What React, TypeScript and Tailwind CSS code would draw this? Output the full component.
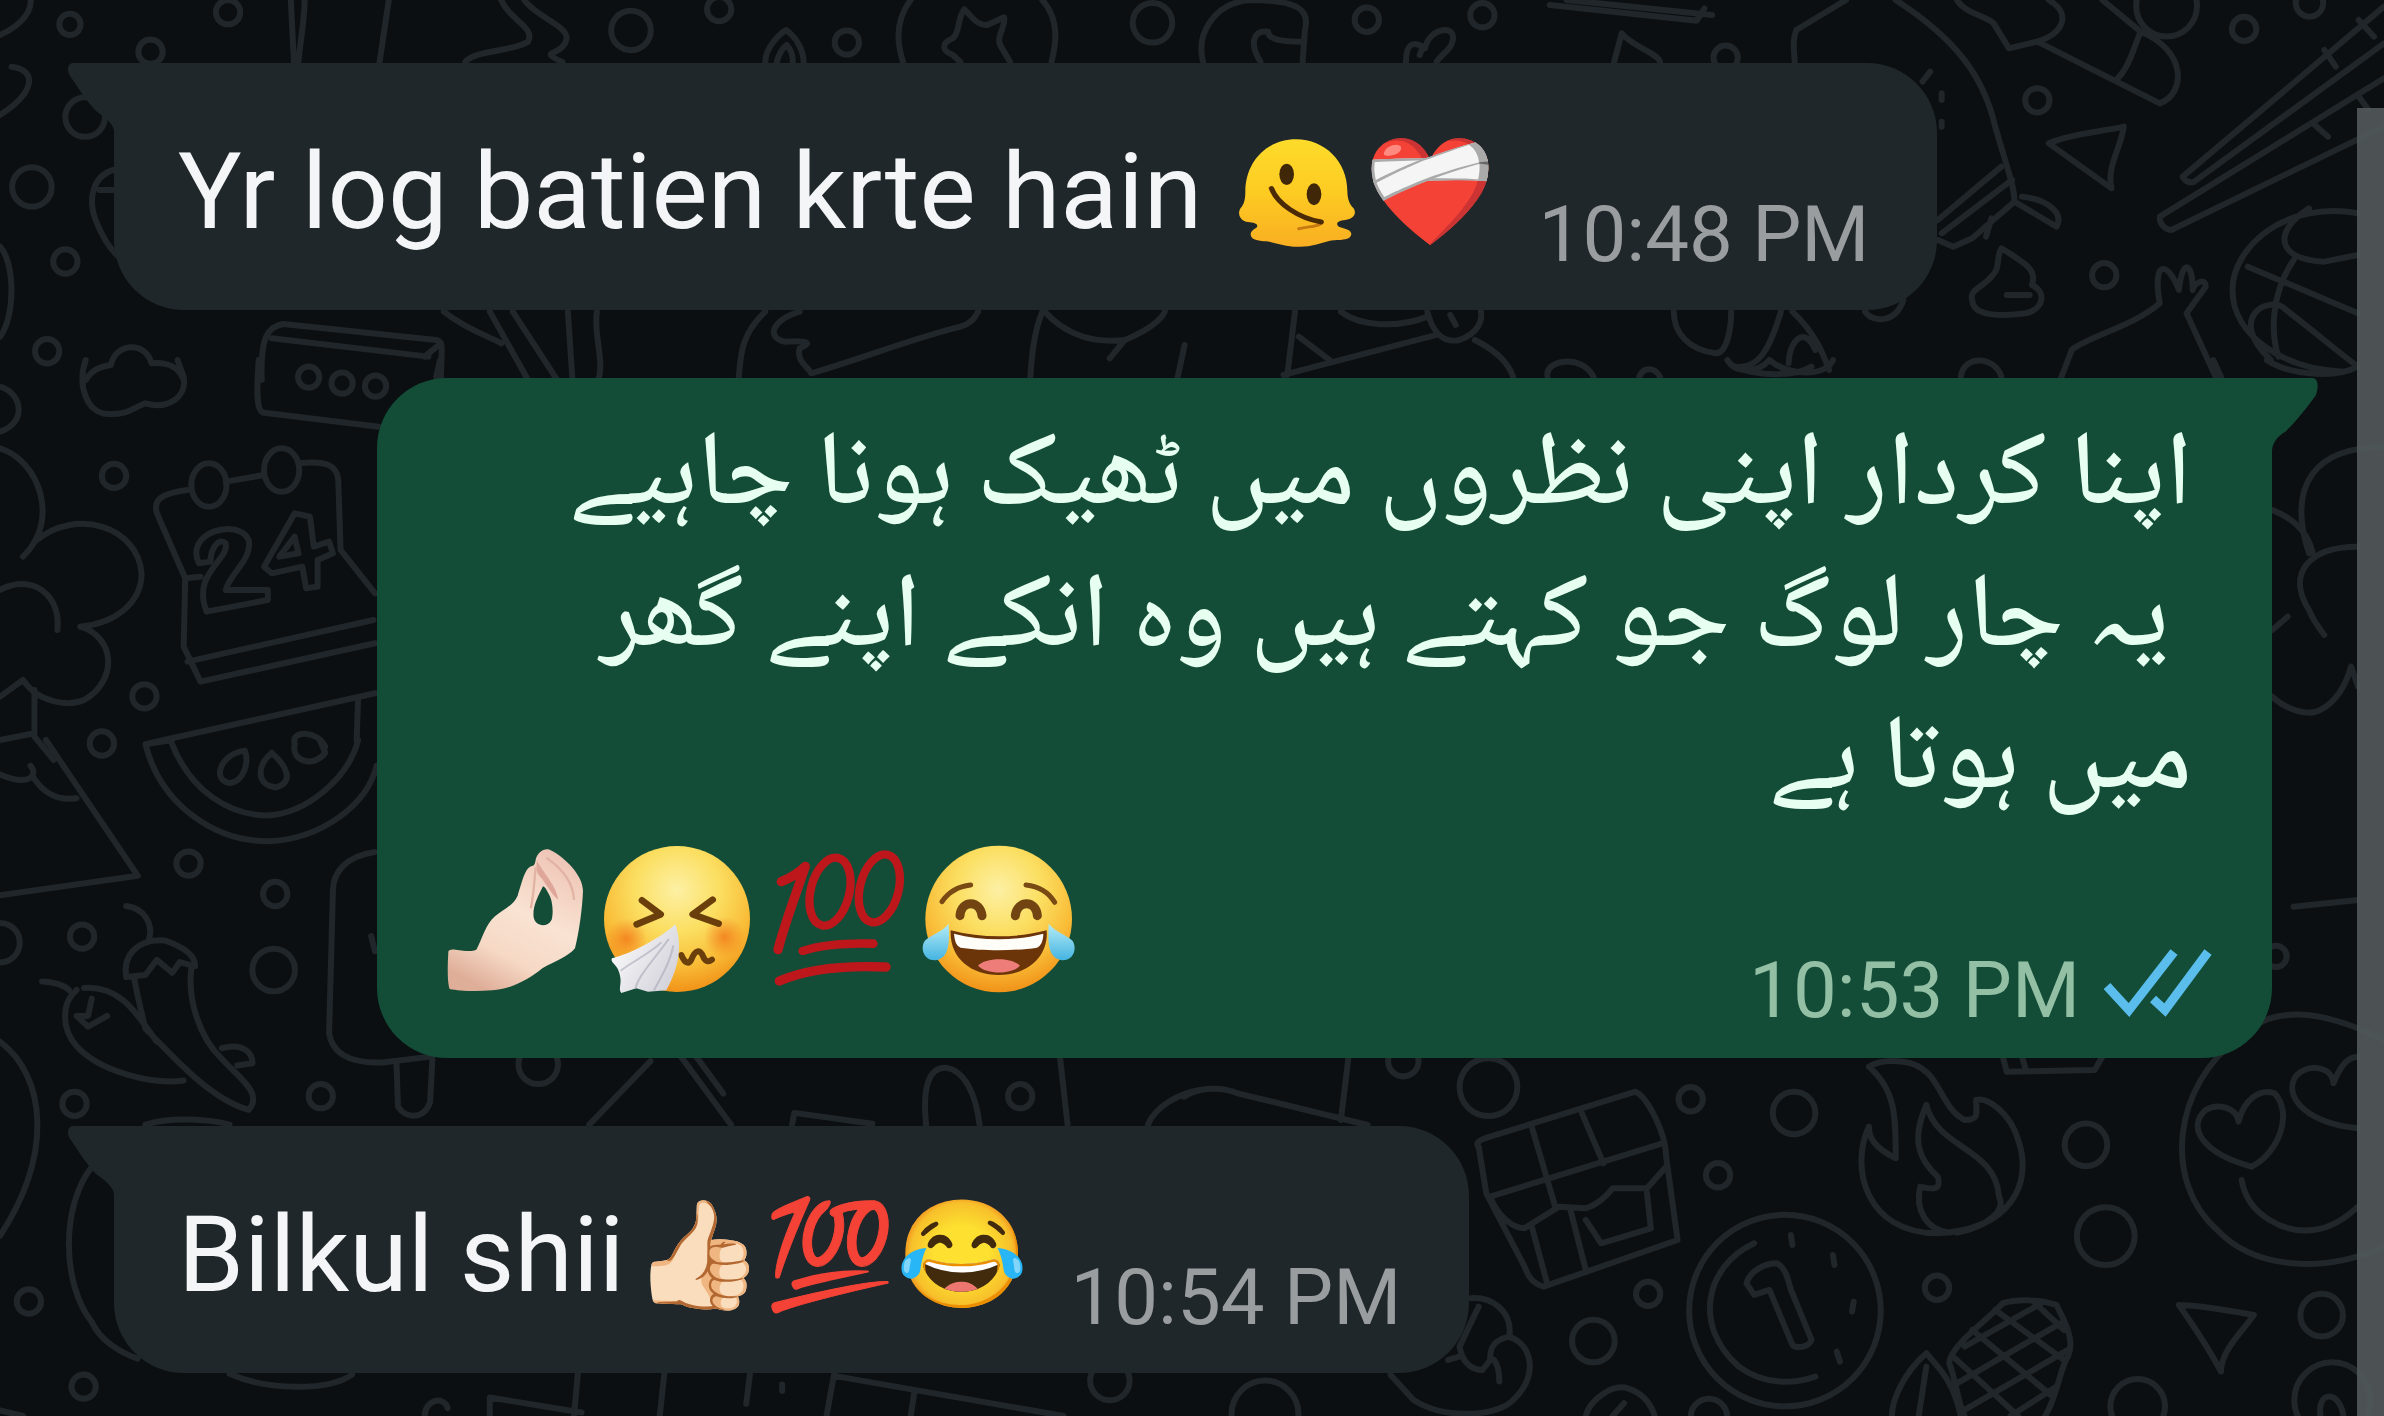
import React from "react";

const doodles: { transform: string; paths: string[] }[] = [
  {
    transform: "scale(.7653 .3333)",
    paths: [
      "M40 0C42 50 15 90 0 105M15 200C50 210 45 280 0 345M0 740C20 790 20 950 0 1010",
      "M380 0L384 186M398 0C398 60 392 130 390 186M508 0L496 186",
      "M655 0C665 60 700 80 690 125C670 155 620 150 608 186M685 0C700 50 745 80 740 120C735 170 700 150 735 186",
      "M1000 186C1000 140 1020 100 1027 90C1040 110 1050 150 1050 186M1015 186C1018 160 1022 145 1028 135C1034 150 1036 170 1036 186",
      "M1190 0C1170 60 1172 130 1180 186M1362 0C1385 60 1380 130 1374 186",
      "M1320 186L1308 140C1300 110 1315 80 1312 52L1290 75C1275 75 1270 50 1260 28C1250 60 1255 95 1245 115C1230 130 1230 150 1245 165L1255 186",
      "M370 972L570 1020C580 1025 577 1040 576 1140M355 1015L560 1070M370 972C350 980 340 1010 342 1140M576 1030L555 1070",
      "M580 935C610 990 640 1010 655 1030M640 935L690 1140M670 935L728 1140M742 935L748 1140M780 935C775 1000 790 1080 782 1140",
      "M1000 935C965 1010 968 1080 965 1140M1045 935C1010 960 1000 1010 1025 1025C1060 1020 1060 1030 1045 1045C1040 1080 1055 1100 1060 1120C1120 1080 1200 1010 1255 980C1270 970 1275 950 1278 935",
      "M1362 935C1350 1000 1348 1080 1346 1140M1365 935C1395 1010 1430 1030 1470 1020C1490 1000 1515 970 1522 935M1450 1075L1468 1025M1548 1035L1538 1140",
      "M112 1140C120 1110 130 1100 145 1095C150 1030 190 1020 198 1090C225 1085 235 1110 240 1140",
      "M148 510C120 530 115 600 125 660C135 720 145 750 155 770M130 570L148 570",
    ],
  },
  {
    transform: "translate(1184 0) scale(.7653 .3333)",
    paths: [
      "M25 186C15 100 40 10 85 0C150 0 165 30 158 90L155 186M100 186C85 130 90 90 110 95C110 120 130 125 155 125",
      "M290 186C290 130 300 120 315 145C320 80 360 70 350 130C348 150 335 165 330 186M312 140L308 165",
      "M562 186L572 100C585 140 620 160 622 186M478 15L670 62L680 25M500 0L690 45",
      "M865 0L800 90C795 120 797 150 798 186M930 0C1010 120 1045 230 1060 380C1075 500 1085 560 1085 600",
      "M1068 500L985 660M1082 540L990 700M985 720L1005 740L1030 715L1060 655L1085 605L1140 680C1150 640 1130 600 1095 590M1055 655L1048 710",
      "M965 245L975 215M990 280L990 300M990 365L990 380",
      "M1010 0C1020 40 1050 50 1058 70L1078 145L1115 125C1150 100 1160 40 1130 0M1115 125L1275 310C1310 280 1310 150 1250 95L1200 0M1250 95C1240 150 1235 200 1220 235",
      "M1130 430C1160 400 1200 395 1228 380C1225 440 1205 500 1212 565Z",
      "M1568 20L1305 530C1308 545 1315 550 1320 545L1568 130M1490 150L1505 200M1535 60L1555 110M1568 235L1275 650C1275 680 1285 690 1290 690L1568 380M1475 370L1495 410M1535 290L1548 330",
      "M1068 745C1100 790 1115 810 1108 855C1130 880 1120 930 1100 940C1070 950 1030 950 1030 900C1025 870 1045 860 1055 830C1068 800 1060 780 1068 745M1075 885L1105 885",
      "M1350 1140L1310 940L1335 860C1335 830 1320 850 1318 870C1318 790 1305 770 1300 870C1285 780 1265 780 1275 910C1240 980 1180 1010 1160 1050L1145 1140",
      "M1534 640C1440 600 1370 740 1370 870C1370 1010 1440 1110 1515 1115M1390 800L1534 940M1470 625C1420 700 1430 780 1490 785L1534 765M1420 1080C1360 950 1420 880 1440 930C1480 1000 1510 1060 1534 1100M1450 780C1420 880 1420 1000 1430 1070",
      "M145 935L135 1125M205 935C230 980 280 985 318 950M318 935C325 1000 340 1030 360 1020C385 1000 390 960 388 935M130 1125L330 1005M150 1010L190 1080M380 1020C415 1060 425 1100 430 1130M348 945L355 975",
      "M640 935C640 1000 660 1050 695 1060C710 1060 715 980 715 935M720 1100C750 1110 765 1050 780 935M720 1100C750 1130 800 1130 820 1100M795 935C825 1000 835 1060 843 1110M790 1090C790 1030 810 970 825 1050M890 935C900 970 930 970 940 900",
    ],
  },
  {
    transform: "translate(0 360) scale(.7653 .3333)",
    paths: [
      "M112 0C100 80 115 160 140 162C170 165 175 140 190 130C220 150 245 110 240 50L232 0",
      "M338 0C335 100 335 155 345 158L495 200M575 0L570 50",
      "M0 80C30 100 35 190 0 215M0 265C50 300 80 480 30 590M45 545C100 440 180 500 185 640C185 730 150 790 105 800M0 690C40 640 80 700 75 810M105 800C150 830 155 960 110 1020C90 1040 50 1030 30 960L0 1010M45 990L45 1120L0 1140M45 1130L70 1200",
      "M245 390C210 400 200 420 205 460L242 655L240 860L262 965L490 850M245 905L488 780M295 365L345 345M390 310C430 300 440 320 442 360L445 570L490 700M242 655L262 650",
      "M250 375a23 65 0 1 0 46 0a23 65 0 1 0-46 0M345 330a23 65 0 1 0 46 0a23 65 0 1 0-46 0",
      "M260 610C240 520 310 470 325 540C330 600 300 640 295 690L350 690L350 720L270 755C250 640 300 600 295 550C285 530 275 570 275 605Z",
      "M345 620L385 460L405 470L410 560L430 545L435 580L415 600L415 680L400 685L395 620L355 640ZM365 590L385 530L390 580Z",
      "M195 1150L490 1000M468 1010L466 1140M385 1150C380 1110 415 1110 425 1160",
    ],
  },
  {
    transform: "translate(1184 360) scale(.7653 .3333)",
    paths: [
      "M1568 262C1480 260 1440 370 1470 580M1422 450C1455 480 1470 530 1475 580M1534 560C1470 560 1440 640 1470 750C1475 780 1485 810 1490 825M1422 810L1442 770M1422 1010C1440 1050 1470 1070 1485 1050C1510 1020 1520 960 1525 920L1534 980M1415 0C1440 40 1500 60 1534 20",
      "M475 50C470 0 520-20 535 50M595 50C600 20 615 20 622 50M710 0C720 40 750 40 765 0C790 50 840 50 848 0M1015 50C1020-20 1060-10 1068 50M1345 0L1355 50",
    ],
  },
  {
    transform: "translate(0 740) scale(.7653 .4311)",
    paths: [
      "M60 0L180 315L0 360M0 80C40 110 50 80 40 60M45 90C60 130 80 140 100 135",
      "M190 10C210 150 280 235 350 235C420 230 480 150 492 60M190 10L225 0M225 10C250 120 300 175 350 175C400 170 455 90 468 0",
      "M320 25C290 30 275 90 300 100C320 95 325 50 320 25M355 30C335 60 335 105 360 110C385 100 375 60 355 30M385 10C380 50 410 65 425 30L418 0",
      "M165 385C190 390 200 430 195 460M55 560C70 560 85 570 90 580M165 550C160 500 180 460 215 465C240 480 255 500 255 525L235 515L225 540L205 510L190 545L165 550",
      "M175 550C180 600 185 630 190 670C220 720 270 830 325 858C345 820 310 780 290 740C260 690 245 600 250 530M110 575C160 570 180 640 205 700M100 580C80 610 80 670 100 710C130 770 200 800 240 790M120 600L115 640L100 640L115 665L140 640M290 715C320 700 330 730 330 750L310 755",
      "M490 260C450 270 435 310 435 350L430 680C435 740 470 750 500 748L560 735M518 745L520 850C530 880 555 880 562 840L565 740M485 455L490 490",
      "M0 700C60 780 70 960 0 1150M770 892L850 745M890 735L955 892M910 735L945 820M1035 892L1038 865L1140 890M1210 892C1205 800 1215 760 1235 760C1260 765 1275 820 1280 892M1385 735L1395 892M1500 892C1510 850 1540 820 1568 812",
      "M190 892C220 875 270 878 300 892M120 990C80 1080 80 1260 120 1350C130 1390 155 1420 180 1435M300 1470C350 1510 430 1510 460 1472",
      "M755 1470L750 1568M868 1470L862 1568M980 1470L975 1540M1090 1470L1080 1568M1090 1475L1390 1568M1195 1510L1190 1568M640 1568L640 1525L760 1560M555 1568C555 1530 580 1520 585 1550M1022 1495L1022 1510M0 1555L30 1568",
    ],
  },
  {
    transform: "translate(1184 900) scale(.7653 .3333)",
    paths: [
      "M215 470L205 660M0 590C20 560 50 560 70 580L240 675M1450 20L1534 0",
      "M385 740C380 730 385 720 400 710L590 575C605 590 630 700 630 770L645 1020L470 1160C455 1150 450 1130 445 1100L395 880ZM455 685L485 920M520 640L548 790M400 890L625 730M400 890C410 950 430 985 445 985L490 920L525 925C545 910 555 880 560 865L605 865L630 800M455 985L475 1155M505 930L525 1110M525 960L545 1030L610 985L605 880",
      "M895 500C930 570 930 650 930 775C900 740 895 710 895 680C870 800 890 1000 985 1000C1080 990 1110 850 1090 720C1080 640 1050 590 1035 600C1035 640 1040 660 1020 660C985 620 990 500 940 485C920 480 905 485 895 500M970 615C950 720 960 780 985 830C990 870 980 870 962 860C955 930 970 990 1000 998M970 615C985 750 1060 740 1065 890C1075 930 1050 980 1010 998",
      "M1070 470L1075 515L1190 510L1200 470M1095 470L1100 510",
      "M1568 420C1480 320 1420 320 1380 410C1290 560 1280 850 1350 990C1400 1110 1490 1120 1568 1040M1395 800C1330 760 1310 680 1335 630C1350 610 1375 620 1378 665C1385 600 1405 565 1425 580C1450 640 1430 760 1395 800M1534 685C1470 670 1440 600 1450 540C1460 490 1500 490 1502 550C1510 500 1520 470 1534 470M1382 840C1390 950 1440 1000 1475 990C1500 985 1520 950 1534 920",
      "M745 1030C680 1100 665 1280 725 1400C760 1460 800 1450 825 1430M793 1005L795 1035M848 1065L850 1095M875 1205L873 1235M853 1355L857 1385M735 1150C740 1110 760 1090 775 1090C790 1110 790 1160 795 1180L820 1320C815 1345 800 1345 795 1335L765 1170L745 1185Z",
      "M375 1195C400 1190 430 1230 425 1310C460 1340 460 1440 430 1500C410 1550 340 1560 300 1500L270 1425M385 1220L360 1340C365 1400 380 1410 390 1410L400 1380C400 1340 405 1320 425 1310M405 1380C412 1400 412 1430 412 1445M345 1380L360 1370",
      "M1070 1210C1090 1195 1120 1200 1140 1215C1150 1260 1165 1320 1155 1370C1145 1400 1140 1500 1125 1548M1070 1210C1050 1260 1000 1340 1000 1390C1010 1450 1010 1500 1020 1548M1030 1290L1135 1490M1060 1230L1150 1380M1005 1370L1090 1548M1110 1205L1150 1290M1145 1270L1010 1450M1155 1350L1020 1530M1140 1460L1080 1548M1120 1210L1020 1340M970 1360C940 1420 925 1500 925 1548M970 1360C985 1400 1005 1440 1015 1548M970 1400L960 1548",
      "M1300 1215C1330 1215 1370 1235 1398 1245C1385 1290 1355 1350 1355 1415C1340 1350 1320 1280 1300 1215",
      "M525 1548C530 1500 560 1450 580 1465C600 1480 610 1510 615 1548M560 1548L575 1510M1485 1548C1480 1470 1510 1470 1515 1548",
    ],
  },
];

const bubbles: [number, number, number][] = [
  [46, 16, 7], [150, 8, 8], [99, 34, 8], [415, 20, 13], [473, 6, 8], [557, 28, 8], [758, 15, 13], [899, 13, 8],
  [975, 10, 8], [1135, 38, 8], [1340, 66, 8], [1476, 19, 8], [1519, 2, 9], [1425, 4, 20], [1384, 181, 8],
  [56, 77, 13], [21, 123, 13], [43, 172, 8], [31, 231, 8], [203, 248, 7], [225, 252, 7], [247, 254, 7],
  [75, 313, 8], [95, 458, 8], [67, 489, 8], [124, 568, 8], [181, 588, 8], [54, 616, 8], [180, 638, 14],
  [49, 726, 8], [211, 721, 8], [671, 721, 8], [19, 856, 8], [55, 912, 8], [0, 620, 13], [354, 700, 13],
  [730, 908, 13], [979, 715, 19], [1112, 723, 8], [1180, 732, 14], [1130, 773, 8], [1372, 753, 14],
  [1385, 813, 19], [1084, 851, 8], [1274, 847, 8], [1048, 882, 14], [1174, 862, 63], [923, 698, 10],
  [1527, 865, 14], [1534, 921, 25], [1406, 925, 18], [832, 930, 22], [1124, 932, 12], [1497, 629, 7],
];

const Wallpaper = () => (
  <svg
    aria-hidden="true"
    viewBox="0 0 2384 1416"
    preserveAspectRatio="xMidYMid slice"
    className="absolute inset-0 size-full"
    fill="none"
    stroke="#20262a"
    strokeWidth="6"
    strokeLinecap="round"
    strokeLinejoin="round"
  >
    {doodles.map((g) => (
      <g key={g.transform} transform={g.transform}>
        {g.paths.map((d) => (
          <path key={d} d={d} vectorEffect="non-scaling-stroke" />
        ))}
      </g>
    ))}
    <g transform="scale(1.5204)">
      {bubbles.map(([x, y, r]) => (
        <circle key={`${x}-${y}`} cx={x} cy={y} r={r} vectorEffect="non-scaling-stroke" />
      ))}
    </g>
  </svg>
);

const Melting = () => (
  <svg role="img" aria-label="melting face" viewBox="45 75 390 345" className="inline-block h-[115px] w-[130px] align-[-24px]">
    <defs>
      <linearGradient id="melt" x1="0" y1="0" x2="0" y2="1">
        <stop offset="0" stopColor="#fddb2b" />
        <stop offset=".5" stopColor="#fdcb22" />
        <stop offset="1" stopColor="#f9ae22" />
      </linearGradient>
    </defs>
    <path
      d="M228 82C140 82 76 150 76 240C76 262 72 278 62 288C50 305 62 328 84 330C100 332 112 334 112 342C112 350 92 352 92 368C94 386 120 386 140 388C170 392 200 406 240 404C275 404 300 394 330 386C355 382 392 388 394 366C394 350 362 350 354 342C348 334 352 326 376 324C400 322 412 304 400 288C390 278 382 262 382 236C382 150 315 82 228 82Z"
      fill="url(#melt)"
    />
    <path d="M150 228C168 275 235 318 306 330C300 345 270 342 236 350" fill="none" stroke="#c87a12" strokeWidth="9" strokeLinecap="round" strokeLinejoin="round" />
    <path d="M155 230C172 275 235 318 304 330" fill="none" stroke="#4a2b06" strokeWidth="15" strokeLinecap="round" />
    <ellipse cx="200" cy="187" rx="22" ry="32" fill="#402708" />
    <ellipse cx="282" cy="247" rx="22" ry="33" fill="#402708" />
  </svg>
);

const PinchedFingers = () => (
  <svg role="img" aria-label="pinched fingers" viewBox="66 45 465 450" className="h-[150px] w-[155px]">
    <defs>
      <linearGradient id="skin" x1=".8" y1="0" x2=".3" y2="1">
        <stop offset="0" stopColor="#eec3b4" />
        <stop offset=".45" stopColor="#f9e3d3" />
        <stop offset=".75" stopColor="#f6d9c5" />
        <stop offset="1" stopColor="#dfae99" />
      </linearGradient>
    </defs>
    <path
      fillRule="evenodd"
      d="M88 372C86 362 96 360 110 362C140 366 160 368 172 362C190 330 200 285 228 262C255 240 282 230 296 200C308 165 316 120 336 112C346 110 348 105 350 92C355 70 375 56 392 62C440 85 492 140 492 185C490 240 480 310 468 358C445 385 410 395 370 418C330 450 280 480 220 484C170 488 120 486 92 480C84 460 86 400 88 372ZM372 172C355 205 340 235 344 265C348 292 385 298 398 272C404 250 400 215 392 200C385 188 380 175 372 172Z"
      fill="url(#skin)"
    />
    <path d="M354 96C372 130 412 170 418 212C405 205 380 165 370 150C360 140 348 130 354 96Z" fill="#dfa69a" />
    <path d="M385 88C430 120 462 160 465 210" fill="none" stroke="#dca898" strokeWidth="7" strokeLinecap="round" opacity=".7" />
    <path d="M350 118C345 160 345 195 336 235" fill="none" stroke="#e3b3a3" strokeWidth="7" strokeLinecap="round" />
  </svg>
);

const FaceGradient = ({ id }: { id: string }) => (
  <radialGradient id={id} cx=".5" cy=".3" r=".72">
    <stop offset="0" stopColor="#fdf0a4" />
    <stop offset=".4" stopColor="#fbdf62" />
    <stop offset=".72" stopColor="#f9bd38" />
    <stop offset="1" stopColor="#f08e15" />
  </radialGradient>
);

const Sneezing = () => (
  <svg role="img" aria-label="sneezing face" viewBox="540 45 480 450" className="h-[150px] w-[160px]">
    <defs>
      <FaceGradient id="sneeze" />
      <radialGradient id="blush">
        <stop offset="0" stopColor="#f2781a" stopOpacity=".8" />
        <stop offset="1" stopColor="#f2781a" stopOpacity="0" />
      </radialGradient>
      <linearGradient id="tissue" x1="0" y1="0" x2="1" y2=".6">
        <stop offset="0" stopColor="#ffffff" />
        <stop offset="1" stopColor="#d5d4dc" />
      </linearGradient>
    </defs>
    <circle cx="777" cy="270" r="219" fill="url(#sneeze)" />
    <circle cx="625" cy="330" r="62" fill="url(#blush)" />
    <circle cx="920" cy="325" r="62" fill="url(#blush)" />
    <path d="M672 214L728 256L656 286M884 212L824 256L902 284" fill="none" stroke="#6b3f0c" strokeWidth="20" strokeLinecap="round" strokeLinejoin="round" />
    <path d="M790 378C800 402 812 408 820 392C832 362 846 358 856 384C862 398 872 400 882 392" fill="none" stroke="#6b3f0c" strokeWidth="18" strokeLinecap="round" strokeLinejoin="round" />
    <path d="M772 286C730 325 640 375 582 388C575 402 600 405 606 440C612 465 600 480 610 492L655 478L690 488L745 484C775 430 798 360 772 286Z" fill="url(#tissue)" />
    <path d="M752 330C710 390 660 440 652 480M766 350C755 410 725 450 708 484M730 340C700 370 640 400 608 425" fill="none" stroke="#a9a8b8" strokeWidth="6" opacity=".6" />
  </svg>
);

const Hundred = () => (
  <svg role="img" aria-label="hundred points" viewBox="30 45 465 450" className="h-[150px] w-[155px]">
    <g fill="none" stroke="#bd171b" strokeLinecap="round" strokeLinejoin="round">
      <path d="M94 158C125 145 148 130 166 112C140 190 105 280 84 362" strokeWidth="28" />
      <ellipse cx="240" cy="188" rx="58" ry="104" strokeWidth="25" transform="rotate(14 240 188)" />
      <ellipse cx="388" cy="178" rx="58" ry="104" strokeWidth="25" transform="rotate(14 388 178)" />
      <path d="M158 366C220 346 300 342 370 344" strokeWidth="26" />
      <path d="M88 456C170 420 270 408 408 414" strokeWidth="28" />
    </g>
  </svg>
);

const TearsOfJoy = () => (
  <svg role="img" aria-label="face with tears of joy" viewBox="495 45 480 450" className="h-[150px] w-[160px]">
    <defs>
      <FaceGradient id="joy" />
      <linearGradient id="tear" x1="0" y1="0" x2="0" y2="1">
        <stop offset="0" stopColor="#b5ecf5" />
        <stop offset="1" stopColor="#45b4e2" />
      </linearGradient>
    </defs>
    <circle cx="740" cy="270" r="220" fill="url(#joy)" />
    <path d="M570 218C590 188 620 172 656 168M822 168C858 172 890 190 908 220" fill="none" stroke="#7a4a14" strokeWidth="15" strokeLinecap="round" />
    <path d="M624 260C628 212 684 212 690 260M790 260C796 212 852 212 856 260" fill="none" stroke="#714412" strokeWidth="27" strokeLinecap="round" />
    <path d="M596 304C690 328 790 328 884 304C890 380 830 438 740 438C655 438 592 385 596 304Z" fill="#6b3409" />
    <path d="M606 314C690 336 790 336 874 314C874 335 866 352 855 356C790 366 690 366 626 356C612 350 608 335 606 314Z" fill="#fffdf8" />
    <path d="M678 410C700 384 780 384 804 410C780 436 705 438 678 410Z" fill="#ee7d79" />
    <path d="M590 284C592 330 596 390 548 394C512 394 504 352 520 334C540 316 568 310 590 284Z" fill="url(#tear)" />
    <path d="M890 284C888 330 884 390 932 394C968 394 976 352 960 334C940 316 912 310 890 284Z" fill="url(#tear)" />
  </svg>
);

const ReadTicks = () => (
  <svg role="img" aria-label="Read" viewBox="0 0 108 70" className="h-[70px] w-[108px]" fill="none" stroke="#5abdec" strokeWidth="9">
    <path d="M3 38L25 62L70 4M49 51L61 62L104 4" />
  </svg>
);

const TailLeft = () => (
  <svg aria-hidden="true" viewBox="0 0 60 68" className="absolute top-0 -left-[46px] h-[68px] w-[60px]">
    <path d="M6 0H60V68H46C45 60 36 54 28 48C18 38 10 24 2 13C-2 6 0 0 6 0Z" fill="#1f272a" />
  </svg>
);

const TailRight = () => (
  <svg aria-hidden="true" viewBox="0 0 60 72" className="absolute top-0 -right-[46px] h-[72px] w-[60px]">
    <path d="M54 0H0V72H14C15 64 20 58 27 54C38 44 50 28 58 17C61 8 60 0 54 0Z" fill="#134d37" />
  </svg>
);

const Incoming = ({ time, children }: { time: string; children: React.ReactNode }) => (
  <li className="relative flex items-end gap-[42px] self-start rounded-[70px] rounded-tl-none bg-[#1f272a] pt-[67px] pr-[68px] pb-9 pl-16">
    <TailLeft />
    <p className="mb-5 h-[124px] text-[106px] leading-[124px] whitespace-nowrap text-[#f3f5f7]">{children}</p>
    <time className="text-[78px] leading-[78px] whitespace-nowrap text-[#9a9da0]">{time}</time>
  </li>
);

const lines = ["اپنا کردار اپنی نظروں میں ٹھیک ہونا چاہیے", " یہ چار لوگ جو کہتے ہیں وہ انکے اپنے گھر", "میں ہوتا ہے"];

export default function App() {
  return (
    <main className="relative min-h-screen overflow-hidden bg-[#0b0f12] font-['Roboto','Noto_Color_Emoji',sans-serif]">
      <Wallpaper />
      <ol className="relative flex flex-col gap-[68px] pt-[63px] pr-28 pb-10 pl-[114px]">
        <Incoming time="10:48 PM">
          Yr log batien krte hain <span className="ml-1.5"><Melting />❤️‍🩹</span>
        </Incoming>
        <li className="relative w-[87.8%] self-end rounded-[70px] rounded-tr-none bg-[#134d37] pt-7 pr-[60px] pb-7 pl-16">
          <TailRight />
          <p dir="rtl" lang="ur" className="pr-5 font-['Noto_Naskh_Arabic_UI','Noto_Naskh_Arabic','DejaVu_Sans',serif] text-[106px] leading-[142px] font-medium text-[#e6fff0]">
            {lines.map((line) => (
              <span key={line} className="block h-[142px] whitespace-pre">{line}</span>
            ))}
          </p>
          <div className="mt-3 flex items-end justify-between">
            <div className="mb-9 flex gap-0.5">
              <PinchedFingers />
              <Sneezing />
              <Hundred />
              <TearsOfJoy />
            </div>
            <div className="flex items-end gap-6">
              <time className="text-[78px] leading-[78px] text-[#93bfa5]">10:53 PM</time>
              <div className="pb-3">
                <ReadTicks />
              </div>
            </div>
          </div>
        </li>
        <Incoming time="10:54 PM">Bilkul shii<span className="ml-2">👍🏻💯😂</span></Incoming>
      </ol>
      <div aria-hidden="true" className="absolute top-[108px] right-0 bottom-0 w-[27px] bg-[#505659]/95" />
    </main>
  );
}
